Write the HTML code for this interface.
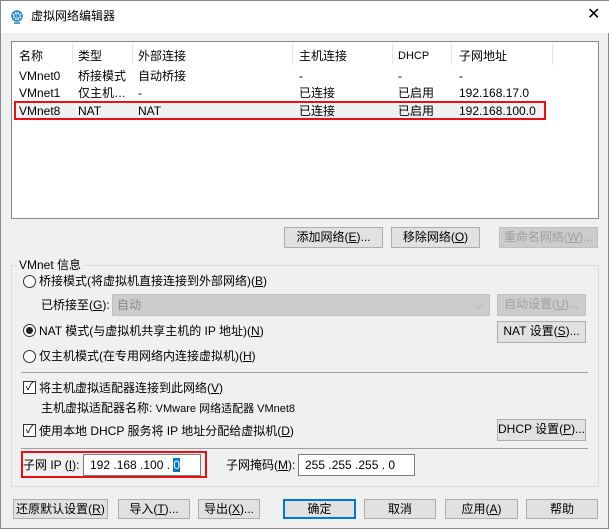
<!DOCTYPE html><html><head><meta charset="utf-8"><style>
*{margin:0;padding:0;box-sizing:border-box}
body{width:609px;height:529px;background:#f0f0f0;font-family:"Liberation Sans","Noto Sans CJK SC",sans-serif;font-size:12px;color:#000;position:relative;overflow:hidden;border:1px solid #888}
.a{position:absolute;white-space:nowrap;line-height:16px;height:16px}
.btn{position:absolute;background:#e1e1e1;border:1px solid #adadad;text-align:center;line-height:18px;font-size:12px;white-space:nowrap;overflow:hidden}
.dis{color:#a0a0a0;background:#ccc;border-color:#bfbfbf}
.sep{position:absolute;top:42px;width:1px;height:22px;background:#e5e5e5}
.rad{position:absolute;width:13px;height:13px;border:1px solid #333;border-radius:50%;background:#fff}
.chk{position:absolute;width:13px;height:13px;border:1px solid #333;background:#fff;font-size:11px;line-height:11px;text-align:center}
.in{position:absolute;background:#fff;border:1px solid #7a7a7a;height:22px;line-height:20px;padding-left:6px;white-space:nowrap}
</style></head><body>
<div class="a" style="left:0;top:0;width:609px;height:32px;background:#fff"></div>
<svg class="a" style="left:9px;top:8px" width="14" height="14" viewBox="0 0 14 14"><circle cx="7" cy="6" r="5" fill="none" stroke="#1a7fd0" stroke-width="1.4"/><path d="M2 6h10M7 1v10M4 2.5q3 3.5 0 7M10 2.5q-3 3.5 0 7" stroke="#1a7fd0" fill="none"/><path d="M4 13h6" stroke="#1a7fd0" stroke-width="1.5"/></svg>
<div class="a" style="left:30px;top:7px;font-size:12px">虚拟网络编辑器</div>
<div class="a" style="left:586px;top:6px;font-size:16px;font-weight:300">✕</div>
<div class="a" style="left:10px;top:40px;width:588px;height:178px;background:#fff;border:1px solid #828790"></div>
<div class="sep" style="left:71px"></div><div class="sep" style="left:131px"></div><div class="sep" style="left:291px"></div><div class="sep" style="left:391px"></div><div class="sep" style="left:450px"></div><div class="sep" style="left:551px"></div>
<div class="a" style="left:18px;top:47px">名称</div><div class="a" style="left:77px;top:47px">类型</div><div class="a" style="left:137px;top:47px">外部连接</div><div class="a" style="left:298px;top:47px">主机连接</div><div class="a" style="left:397px;top:47px;font-size:11px">DHCP</div><div class="a" style="left:458px;top:47px">子网地址</div>
<div class="a" style="left:18px;top:67px">VMnet0</div><div class="a" style="left:77px;top:67px">桥接模式</div><div class="a" style="left:137px;top:67px">自动桥接</div><div class="a" style="left:298px;top:67px">-</div><div class="a" style="left:397px;top:67px">-</div><div class="a" style="left:458px;top:67px">-</div>
<div class="a" style="left:18px;top:84px">VMnet1</div><div class="a" style="left:77px;top:84px">仅主机…</div><div class="a" style="left:137px;top:84px">-</div><div class="a" style="left:298px;top:84px">已连接</div><div class="a" style="left:397px;top:84px">已启用</div><div class="a" style="left:458px;top:84px">192.168.17.0</div>
<div class="a" style="left:13px;top:100px;width:532px;height:19px;background:#f0f0f0;border:2px solid #e81010"></div>
<div class="a" style="left:18px;top:102px">VMnet8</div><div class="a" style="left:77px;top:102px">NAT</div><div class="a" style="left:137px;top:102px">NAT</div><div class="a" style="left:298px;top:102px">已连接</div><div class="a" style="left:397px;top:102px">已启用</div><div class="a" style="left:458px;top:102px">192.168.100.0</div>
<div class="btn" style="left:283px;top:226px;width:99px;height:21px">添加网络(<u>E</u>)...</div>
<div class="btn" style="left:390px;top:226px;width:89px;height:21px">移除网络(<u>O</u>)</div>
<div class="btn dis" style="left:498px;top:226px;width:99px;height:21px">重命名网络(<u>W</u>)...</div>
<div class="a" style="left:10px;top:264px;width:588px;height:222px;border:1px solid #dcdcdc"></div>
<div class="a" style="left:16px;top:256px;background:#f0f0f0;padding:0 2px">VMnet 信息</div>
<div class="rad" style="left:22px;top:274px"></div><div class="a" style="left:38px;top:272px">桥接模式(将虚拟机直接连接到外部网络)(<u>B</u>)</div>
<div class="a" style="left:40px;top:296px">已桥接至(<u>G</u>):</div>
<div class="a" style="left:111px;top:293px;width:378px;height:22px;background:#ccc;border:1px solid #bfbfbf;color:#888;line-height:20px;padding-left:4px">自动<span style="position:absolute;right:6px;color:#aaa">⌵</span></div>
<div class="btn dis" style="left:496px;top:293px;width:89px;height:22px">自动设置(<u>U</u>)...</div>
<div class="rad" style="left:22px;top:323px"><div style="position:absolute;left:2px;top:2px;width:7px;height:7px;border-radius:50%;background:#222"></div></div><div class="a" style="left:38px;top:322px">NAT 模式(与虚拟机共享主机的 IP 地址)(<u>N</u>)</div>
<div class="btn" style="left:496px;top:320px;width:89px;height:22px">NAT 设置(<u>S</u>)...</div>
<div class="rad" style="left:22px;top:349px"></div><div class="a" style="left:38px;top:347px">仅主机模式(在专用网络内连接虚拟机)(<u>H</u>)</div>
<div class="a" style="left:20px;top:371px;width:567px;height:1px;background:#a0a0a0"></div>
<div class="chk" style="left:22px;top:380px">✓</div><div class="a" style="left:38px;top:379px">将主机虚拟适配器连接到此网络(<u>V</u>)</div>
<div class="a" style="left:40px;top:399px">主机虚拟适配器名称: <span style="font-size:11px">VMware 网络适配器 VMnet8</span></div>
<div class="chk" style="left:22px;top:423px">✓</div><div class="a" style="left:38px;top:422px">使用本地 DHCP 服务将 IP 地址分配给虚拟机(<u>D</u>)</div>
<div class="btn" style="left:496px;top:418px;width:89px;height:22px">DHCP 设置(<u>P</u>)...</div>
<div class="a" style="left:20px;top:447px;width:567px;height:1px;background:#a0a0a0"></div>
<div class="a" style="left:20px;top:450px;width:186px;height:27px;border:2px solid #e81010"></div>
<div class="a" style="left:22px;top:456px">子网 IP (<u>I</u>):</div>
<div class="in" style="left:82px;top:453px;width:118px">192 .168 .100 . <span style="background:#0078d7;color:#fff">0</span></div>
<div class="a" style="left:225px;top:456px">子网掩码(<u>M</u>):</div>
<div class="in" style="left:297px;top:453px;width:117px">255 .255 .255 . 0</div>
<div class="btn" style="left:12px;top:498px;width:95px;height:20px">还原默认设置(<u>R</u>)</div>
<div class="btn" style="left:117px;top:498px;width:72px;height:20px">导入(<u>T</u>)...</div>
<div class="btn" style="left:197px;top:498px;width:62px;height:20px">导出(<u>X</u>)...</div>
<div class="btn" style="left:282px;top:498px;width:73px;height:20px;border:2px solid #0078d7;line-height:16px">确定</div>
<div class="btn" style="left:363px;top:498px;width:72px;height:20px">取消</div>
<div class="btn" style="left:444px;top:498px;width:73px;height:20px">应用(<u>A</u>)</div>
<div class="btn" style="left:525px;top:498px;width:72px;height:20px">帮助</div>
</body></html>
